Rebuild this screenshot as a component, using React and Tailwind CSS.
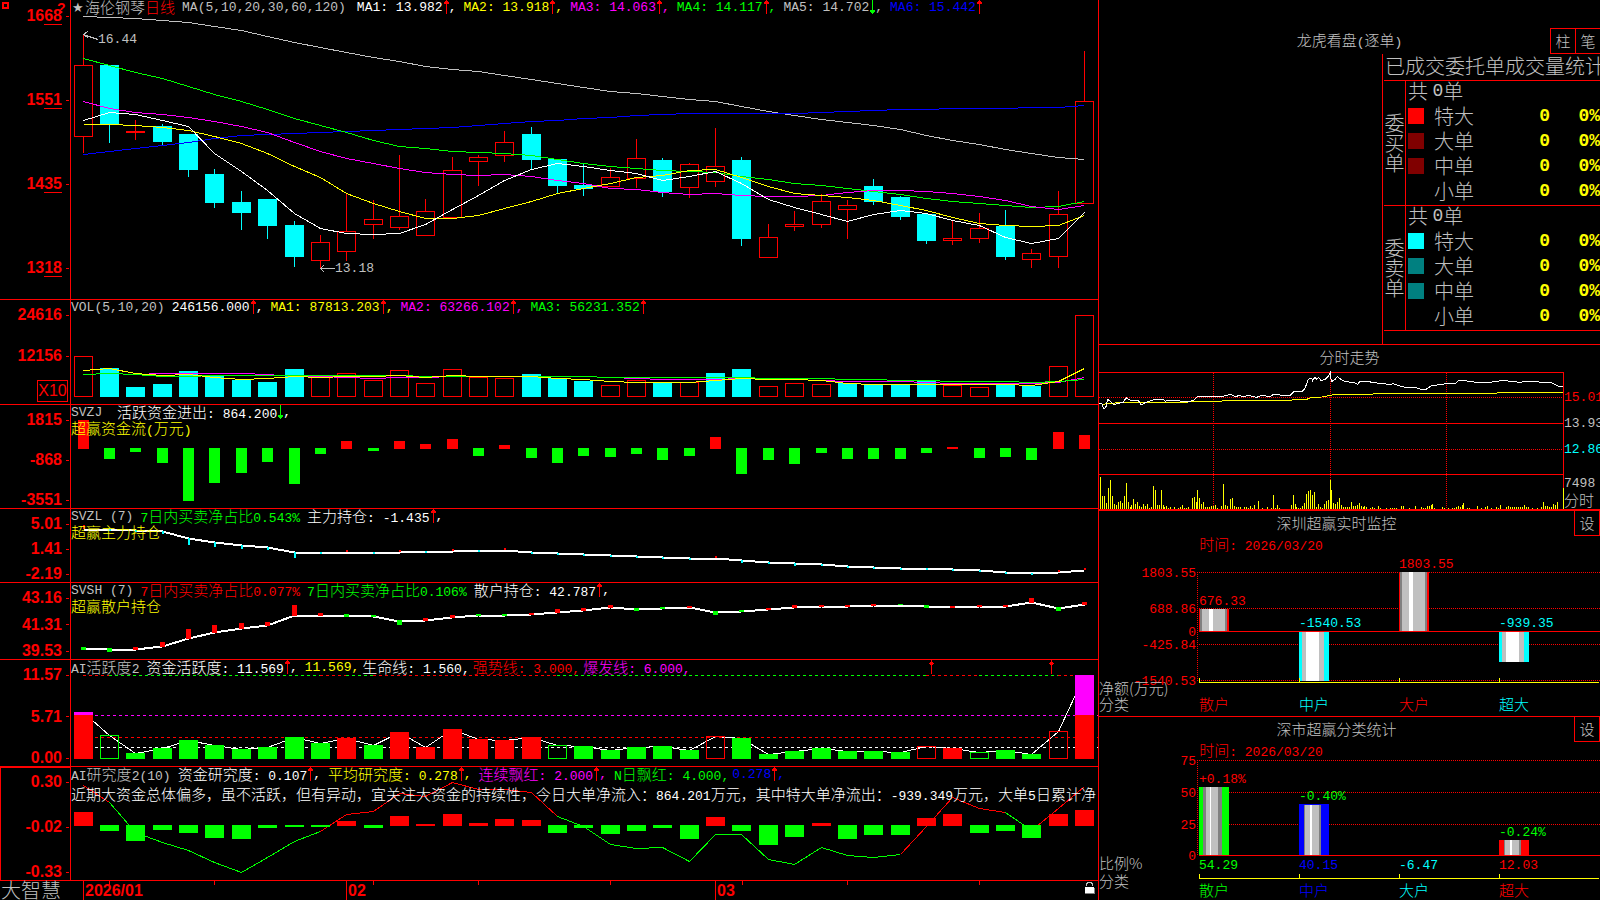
import React from "react";

const barX = (i) => Math.floor(83.2 + i * 26.35);

// [direction, high, body top, body bottom, low]
const candles = [
  ["up", 34, 65, 136, 153], ["down", 65, 65, 124, 143], ["up", 120, 131, 132, 140],
  ["down", 124, 126, 142, 145], ["down", 134, 134, 170, 177], ["down", 169, 174, 203, 208],
  ["down", 191, 202, 213, 230], ["down", 199, 199, 226, 239], ["down", 221, 225, 257, 267],
  ["up", 235, 242, 260, 268], ["up", 194, 231, 251, 261], ["up", 200, 219, 224, 239],
  ["up", 155, 216, 227, 230], ["up", 199, 211, 235, 235], ["up", 157, 170, 217, 217],
  ["up", 155, 157, 161, 186], ["up", 131, 142, 155, 162], ["down", 127, 134, 160, 170],
  ["down", 159, 159, 186, 194], ["down", 163, 185, 189, 196], ["up", 168, 177, 186, 186],
  ["up", 139, 158, 178, 188], ["down", 158, 160, 192, 197], ["up", 163, 164, 187, 198],
  ["up", 128, 166, 181, 187], ["down", 157, 160, 239, 246], ["up", 224, 237, 257, 257],
  ["up", 211, 224, 226, 231], ["up", 194, 201, 224, 228], ["up", 200, 205, 209, 239],
  ["down", 179, 186, 202, 205], ["down", 196, 197, 217, 220], ["down", 214, 214, 241, 244],
  ["up", 221, 238, 240, 245], ["up", 213, 228, 238, 243], ["down", 210, 226, 257, 260],
  ["up", 249, 253, 259, 268], ["up", 191, 214, 256, 268], ["up", 51, 101, 203, 203],
];

const maLines = [
  ["#c0c0c0", [16, 17, 18, 20, 22, 26, 30, 36, 42, 47, 52, 57, 61, 66, 69, 71, 75, 79, 83, 87, 91, 93, 96, 99, 101, 106, 111, 115, 119, 122, 125, 129, 135, 140, 144, 149, 153, 157, 159]],
  ["#0000ff", [154, 151, 148, 145, 142, 138, 135, 134, 133, 132, 131, 130, 129, 128, 127, 125, 123, 121, 120, 118, 117, 115, 114, 113, 113, 113, 113, 113, 112, 111, 110, 109, 109, 108, 108, 108, 107, 107, 105]],
  ["#00ff00", [58, 65, 72, 78, 86, 94, 101, 109, 118, 125, 132, 140, 146, 148, 151, 152, 153, 155, 159, 163, 166, 168, 170, 171, 172, 176, 179, 183, 185, 188, 191, 194, 198, 201, 203, 205, 207, 206, 201]],
  ["#ff00ff", [101, 108, 112, 114, 117, 121, 126, 132, 142, 151, 158, 163, 168, 172, 174, 175, 174, 176, 180, 183, 188, 189, 192, 194, 193, 195, 196, 196, 195, 192, 190, 190, 191, 193, 196, 200, 206, 209, 205]],
  ["#ffff00", [124, 124, 125, 127, 130, 136, 143, 153, 166, 177, 193, 203, 211, 218, 218, 215, 208, 201, 193, 188, 183, 177, 175, 170, 169, 177, 186, 193, 195, 197, 200, 205, 210, 217, 223, 225, 226, 225, 215]],
  ["#ffffff", [120, 112, 114, 120, 126, 153, 171, 190, 213, 228, 233, 234, 233, 224, 209, 195, 180, 169, 163, 166, 170, 173, 180, 176, 171, 183, 199, 207, 214, 221, 214, 210, 213, 220, 225, 237, 243, 238, 212]],
];

const volumes = [
  ["up", 356], ["down", 368], ["down", 387], ["down", 384], ["down", 371], ["down", 376], ["down", 380],
  ["down", 382], ["down", 369], ["up", 377], ["up", 373], ["up", 380], ["up", 370], ["up", 383],
  ["up", 369], ["up", 377], ["up", 378], ["down", 374], ["down", 378], ["down", 381], ["up", 385],
  ["up", 380], ["down", 382], ["up", 382], ["down", 373], ["down", 369], ["up", 386], ["up", 383],
  ["up", 384], ["down", 383], ["down", 385], ["down", 384], ["down", 381], ["up", 385], ["up", 387],
  ["down", 384], ["down", 386], ["up", 366], ["up", 315],
];

const volLines = [
  ["#ff00ff", [374, 373, 374, 373, 373, 373, 373, 374, 376, 376, 377, 378, 377, 377, 376, 376, 376, 376, 376, 376, 377, 378, 379, 379, 379, 378, 379, 379, 380, 381, 381, 381, 382, 383, 383, 383, 383, 382, 377]],
  ["#00ff00", [374, 373, 374, 376, 376, 375, 375, 375, 375, 375, 375, 375, 375, 376, 376, 376, 376, 376, 376, 376, 377, 377, 377, 377, 377, 377, 378, 378, 378, 379, 379, 380, 380, 381, 381, 381, 382, 381, 379]],
  ["#ffff00", [370, 368, 373, 375, 374, 377, 379, 378, 376, 377, 376, 376, 375, 377, 375, 376, 376, 376, 378, 379, 381, 382, 382, 382, 380, 378, 379, 379, 380, 383, 384, 384, 384, 384, 384, 384, 385, 381, 368]],
];

// other end of each money flow bar, measured from the zero line at 448
const flow = [420, 459, 452, 463, 501, 483, 473, 462, 484, 454, 441, 451, 441, 444, 439, 456, 445, 458, 463, 456, 457, 454, 460, 456, 437, 474, 460, 464, 453, 459, 459, 459, 453, 447, 458, 457, 460, 432, 435];

const mainHold = [529, 529, 530, 531, 538, 542, 545, 547, 552, 552, 552, 552, 552, 551, 551, 550, 550, 552, 553, 554, 555, 556, 557, 558, 558, 560, 562, 563, 564, 566, 567, 568, 568, 569, 570, 572, 573, 572, 570];
const mainTicks = [-4, 2, 2, 3, 7, 5, 4, 3, 6, 2, -2, 2, -2, 2, -2, 2, -2, 2, 2, 2, 2, 2, 2, 2, -2, 3, 2, 3, 2, 2, 2, 2, 2, 2, 2, 2, 2, -2, -2];

const retailHold = [648, 649, 649, 646, 638, 632, 628, 625, 615, 615, 615, 616, 621, 620, 617, 615, 615, 614, 612, 610, 607, 609, 608, 607, 612, 611, 609, 607, 606, 606, 605, 605, 606, 607, 606, 606, 602, 608, 604];
const retailTicks = [2, 3, -2, -4, -9, -7, -5, -3, -10, -2, 2, 1, 4, -2, -2, 1, 1, -1, -3, -2, -2, 2, 1, -1, 3, 1, -1, -2, -1, -1, -1, 0, 2, -1, -1, -1, -4, 3, -2];

// g/r are filled, G/R are outlines
const active = [
  ["r", 712], ["G", 735], ["g", 753], ["g", 748], ["g", 740], ["g", 745], ["g", 749], ["g", 747], ["g", 737],
  ["g", 743], ["r", 738], ["g", 745], ["r", 732], ["r", 747], ["r", 729], ["r", 739], ["r", 740], ["r", 737],
  ["G", 745], ["g", 746], ["g", 750], ["g", 747], ["g", 746], ["g", 750], ["R", 736], ["g", 738], ["g", 754],
  ["g", 751], ["g", 748], ["g", 751], ["g", 751], ["g", 752], ["R", 746], ["r", 748], ["G", 752], ["g", 750],
  ["g", 754], ["R", 731], ["r", 675],
];
const topDashes = [
  ["#ff0000", 83, 109], ["#00ff00", 109, 320], ["#ff0000", 320, 346], ["#00ff00", 346, 373],
  ["#ff0000", 373, 557], ["#00ff00", 557, 926], ["#ff0000", 926, 979], ["#00ff00", 979, 1058], ["#ff0000", 1058, 1075],
];

const research = [812, 831, 841, 830, 833, 838, 839, 828, 827, 827, 821, 828, 816, 824, 814, 823, 819, 820, 833, 828, 834, 831, 828, 839, 817, 831, 845, 837, 823, 839, 835, 835, 818, 814, 833, 831, 838, 814, 810];
const researchLine = [785, 802, 832, 842, 850, 862, 872, 857, 841, 831, 814, 811, 793, 796, 782, 789, 789, 792, 816, 826, 844, 848, 847, 861, 834, 834, 859, 864, 847, 855, 857, 854, 826, 797, 808, 812, 830, 808, 786];
const researchSegments = [
  ["#ff0000", 0, 1], ["#00ff00", 1, 9], ["#ff0000", 9, 18], ["#00ff00", 18, 31],
  ["#ff0000", 31, 35], ["#00ff00", 35, 36], ["#ff0000", 36, 38],
];

const minuteLine =
  "28,190 35,190 42,207 48,200 53,178 60,183 72,195 84,190 100,187 108,173 120,180 145,181 153,195 165,188 190,180 218,177 226,184 232,180 250,182 270,183 290,186 310,181 322,171 340,170 395,171 405,166 425,164 435,170 450,166 460,171 475,166 500,172 515,166 540,170 550,163 570,165 600,166 612,155 635,155 645,145 655,118 665,115 668,122 674,112 680,118 686,112 693,122 705,118 715,108 721,98 724,125 735,118 742,110 755,120 765,125 790,127 803,133 810,124 835,125 860,129 885,131 895,135 910,131 930,138 945,142 980,144 995,149 1010,147 1025,137 1050,134 1070,131 1095,131 1105,123 1125,122 1160,127 1200,127 1240,121 1255,123 1290,127 1310,124 1385,128 1405,138 1420,139";
const averageLine =
  "38,193 60,190 105,187 290,187 300,184 395,184 400,181 605,181 610,178 650,178 665,172 695,171 715,167 740,163 848,163 852,160 1220,160 1224,157 1420,157";
const minuteVolumes = [
  [31, 411], [37, 468], [43, 468], [49, 488], [55, 444], [61, 420], [67, 468], [73, 491], [79, 494], [85, 486],
  [91, 483], [97, 488], [103, 468], [109, 429], [115, 486], [121, 500], [124, 494], [130, 477], [136, 492],
  [142, 486], [148, 498], [154, 500], [160, 492], [166, 498], [172, 492], [178, 503], [184, 500], [190, 438],
  [196, 450], [202, 495], [208, 495], [214, 450], [220, 494], [223, 501], [229, 498], [235, 503], [241, 501],
  [253, 501], [265, 503], [271, 500], [277, 495], [283, 503], [289, 504], [295, 501], [307, 474], [313, 471],
  [319, 486], [322, 450], [328, 474], [334, 491], [340, 486], [346, 500], [352, 501], [358, 501], [364, 498],
  [370, 497], [376, 495], [382, 503], [394, 498], [400, 432], [406, 495], [412, 498], [421, 477], [427, 474],
  [433, 497], [439, 501], [445, 501], [451, 501], [463, 500], [469, 501], [475, 504], [481, 498], [487, 503],
  [493, 495], [505, 483], [517, 503], [532, 500], [544, 503], [550, 465], [556, 503], [562, 495], [568, 503],
  [604, 495], [610, 465], [616, 492], [619, 500], [625, 504], [631, 503], [637, 497], [643, 490], [649, 462],
  [655, 453], [661, 450], [667, 465], [673, 456], [679, 501], [685, 492], [691, 500], [697, 503], [703, 492],
  [709, 483], [715, 480], [721, 420], [724, 450], [730, 489], [736, 492], [742, 486], [748, 474], [754, 495],
  [760, 501], [766, 501], [772, 500], [778, 500], [784, 486], [790, 498], [796, 497], [802, 495], [808, 489],
  [814, 498], [820, 501], [823, 498], [829, 501], [841, 504], [847, 501], [853, 503], [865, 498], [871, 504],
  [889, 504], [901, 504], [907, 503], [913, 504], [919, 504], [934, 498], [940, 498], [958, 503], [976, 498],
  [994, 501], [1000, 503], [1006, 503], [1012, 498], [1018, 498], [1024, 495], [1027, 492], [1033, 503],
  [1057, 501], [1063, 504], [1075, 504], [1087, 504], [1093, 503], [1099, 500], [1105, 498], [1111, 500],
  [1117, 495], [1120, 489], [1132, 503], [1138, 504], [1162, 498], [1174, 504], [1186, 501], [1192, 498],
  [1204, 504], [1219, 501], [1225, 503], [1231, 495], [1249, 501], [1255, 498], [1261, 500], [1267, 501],
  [1273, 501], [1279, 501], [1285, 501], [1291, 501], [1297, 500], [1303, 495], [1309, 501], [1315, 500],
  [1327, 503], [1342, 503], [1354, 501], [1360, 486], [1366, 498], [1372, 498], [1378, 501], [1384, 500],
  [1390, 492], [1396, 495], [1402, 486], [1420, 444],
];

const toPoints = (ys, from = 0) => ys.map((y, i) => `${barX(i + from) + 0.5},${y + 0.5}`).join(" ");

// Latin is set in the mono face, Chinese in the CJK face one step larger
const Txt = ({ children }) => (
  <span className="whitespace-pre">
    {String(children).split(/([^\x00-\x7F]+)/).filter(Boolean).map((part, i) =>
      /[^\x00-\x7F]/.test(part) ? (
        <span key={i} className="font-['Noto_Sans_CJK_SC',sans-serif] text-[15px] font-light">{part}</span>
      ) : (
        <span key={i} className="font-['Liberation_Mono',monospace] text-[13px]">{part}</span>
      )
    )}
  </span>
);

const Arrow = ({ down }) => (
  <svg viewBox="0 0 6 15" className="h-[15px] w-[6px] shrink-0" shapeRendering="crispEdges">
    {down ? (
      <path d="M3 0h1v14h-1zM1 10h5v2h-5zM2 12h3v1h-3z" fill="#00ff00" />
    ) : (
      <path d="M3 0h1v14h-1zM2 1h3v1h-3zM1 2h5v2h-5z" fill="#ff0000" />
    )}
  </svg>
);

const Item = ({ color, text, dir }) => (
  <span className={`flex items-center ${color} ${text.endsWith(",") ? "-mr-1" : ""}`}>
    <Txt>{text}</Txt>
    {dir && <Arrow down={dir === "down"} />}
    {dir && <Txt>,</Txt>}
  </span>
);

const Tick = ({ children }) => (
  <div className="flex h-4 items-center justify-end gap-1 font-['Liberation_Sans',sans-serif] text-base leading-4 font-bold text-[#ff0000]">
    {children}
    <span className="h-px w-[3px] bg-[#ff0000]" />
  </div>
);

const Panel = ({ size, axis, box, header, note, noteStyle = "", children }) => (
  <section className={`flex border-b border-[#ff0000] ${size}`}>
    <div className={`flex w-[71px] shrink-0 flex-col border-r border-[#ff0000] pr-px ${box || "justify-between pt-[7px]"}`}>
      {axis}
    </div>
    <div className="relative min-w-0 flex-1 overflow-hidden">
      {children}
      <div className="absolute inset-x-0 top-0">
        <div className="flex h-[15px] items-center gap-[7px] leading-[15px]">{header}</div>
        {note && <p className={`h-[15px] leading-[15px] ${noteStyle || "text-[#ffff00]"}`}><Txt>{note}</Txt></p>}
      </div>
    </div>
  </section>
);

const Plot = ({ top, height, children }) => (
  <svg
    viewBox={`71 ${top} 1027 ${height}`}
    preserveAspectRatio="none"
    shapeRendering="crispEdges"
    className="block h-full w-full"
    fill="none"
  >
    {children}
  </svg>
);

const Labels = ({ values }) => values.map((v) => <Tick key={v}>{v}</Tick>);

const PriceChart = () => (
  <Panel
    size="h-[300px]"
    box="justify-between pt-2 pb-[23px]"
    axis={["1668", "1551", "1435", "1318"].map((v) => (
      <Tick key={v}>
        <span>
          {v.slice(0, 2)}
          <span className="border-b border-[#ff0000]">{v.slice(2)}</span>
        </span>
      </Tick>
    ))}
    header={
      <>
        <span className="flex items-center pl-px text-[#c0c0c0]">
          <span className="w-[13px] font-['DejaVu_Sans',sans-serif] text-[13px]">★</span>
          <Txt>海伦钢琴</Txt>
          <span className="text-[#ff0000]"><Txt>日线</Txt></span>
        </span>
        <span className="mr-1 text-[#c0c0c0]"><Txt>MA(5,10,20,30,60,120)</Txt></span>
        <Item color="text-white" text="MA1: 13.982" dir="up" />
        <Item color="text-[#ffff00]" text="MA2: 13.918" dir="up" />
        <Item color="text-[#ff00ff]" text="MA3: 14.063" dir="up" />
        <Item color="text-[#00ff00]" text="MA4: 14.117" dir="up" />
        <Item color="text-[#c0c0c0]" text="MA5: 14.702" dir="down" />
        <span className="flex items-center text-[#0000ff]"><Txt>MA6: 15.442</Txt><Arrow /></span>
      </>
    }
  >
    <Plot top={0} height={299}>
      {candles.map(([dir, high, top, bottom, low], i) => {
        const x = barX(i);
        return dir === "down" ? (
          <g key={i} fill="#00ffff">
            <rect x={x} y={high} width="1" height={low - high} />
            <rect x={x - 9} y={top} width="19" height={bottom - top} />
          </g>
        ) : (
          <g key={i} stroke="#ff0000">
            <path d={`M${x + 0.5} ${high}V${top}M${x + 0.5} ${bottom}V${low}`} />
            <rect x={x - 8.5} y={top + 0.5} width="18" height={bottom - top} />
          </g>
        );
      })}
      {maLines.map(([color, ys]) => (
        <polyline key={color} points={toPoints(ys)} stroke={color} />
      ))}
      <path d="M83 34.5L98 39.5M88 31L83.5 34.5L88 38M320 268.5H335M324 265L320.5 268.5L324 272" stroke="#c0c0c0" />
    </Plot>
    <span className="absolute top-[32px] left-[27px] leading-4 text-[#c0c0c0]"><Txt>16.44</Txt></span>
    <span className="absolute top-[261px] left-[264px] leading-4 text-[#c0c0c0]"><Txt>13.18</Txt></span>
  </Panel>
);

const VolumeChart = () => (
  <Panel
    size="h-[105px]"
    box="pt-[7px]"
    axis={
      <>
        <Tick>24616</Tick>
        <div className="mt-[25px]"><Tick>12156</Tick></div>
        <div className="mt-4 mr-px ml-auto h-[22px] w-[31px] border border-[#ff0000] text-center font-['Liberation_Sans',sans-serif] text-base leading-5 text-[#ff0000]">
          X10
        </div>
      </>
    }
    header={
      <>
        <Item color="text-[#c0c0c0]" text="VOL(5,10,20)" />
        <Item color="text-white" text="246156.000" dir="up" />
        <Item color="text-[#ffff00]" text="MA1: 87813.203" dir="up" />
        <Item color="text-[#ff00ff]" text="MA2: 63266.102" dir="up" />
        <span className="flex items-center text-[#00ff00]"><Txt>MA3: 56231.352</Txt><Arrow /></span>
      </>
    }
  >
    <Plot top={300} height={104}>
      {volumes.map(([dir, top], i) =>
        dir === "down" ? (
          <rect key={i} x={barX(i) - 9} y={top} width="19" height={397 - top} fill="#00ffff" />
        ) : (
          <rect key={i} x={barX(i) - 8.5} y={top + 0.5} width="18" height={396 - top} stroke="#ff0000" />
        )
      )}
      {volLines.map(([color, ys]) => (
        <polyline key={color} points={toPoints(ys)} stroke={color} />
      ))}
    </Plot>
  </Panel>
);

const FlowChart = () => (
  <Panel
    size="h-[104px]"
    axis={<Labels values={["1815", "-868", "-3551"]} />}
    header={
      <>
        <Item color="text-[#c0c0c0]" text="SVZJ " />
        <Item color="text-white" text="活跃资金进出: 864.200" dir="down" />
      </>
    }
    note="超赢资金流(万元)"
  >
    <Plot top={405} height={103}>
      {flow.map((y, i) => (
        <rect
          key={i}
          x={barX(i) - 5}
          y={Math.min(y, 448)}
          width="11"
          height={y < 448 ? 449 - y : y - 448}
          fill={y < 448 ? "#ff0000" : "#00ff00"}
        />
      ))}
    </Plot>
  </Panel>
);

const MainHoldChart = () => (
  <Panel
    size="h-[74px]"
    axis={<Labels values={["5.01", "1.41", "-2.19"]} />}
    header={
      <>
        <Item color="text-[#c0c0c0]" text="SVZL (7)" />
        <Item color="text-[#00ff00]" text="7日内买卖净占比0.543%" />
        <Item color="text-white" text="主力持仓: -1.435" dir="up" />
      </>
    }
    note="超赢主力持仓"
  >
    <Plot top={509} height={73}>
      <polyline points={toPoints(mainHold)} stroke="#ffffff" strokeWidth="2" />
      {mainTicks.map((t, i) => (
        <rect
          key={i}
          x={barX(i)}
          y={t < 0 ? mainHold[i] + t : mainHold[i]}
          width="2"
          height={Math.abs(t)}
          fill={t < 0 ? "#ff0000" : "#00ffff"}
        />
      ))}
    </Plot>
  </Panel>
);

const RetailHoldChart = () => (
  <Panel
    size="h-[77px]"
    axis={<Labels values={["43.16", "41.31", "39.53"]} />}
    header={
      <>
        <Item color="text-[#c0c0c0]" text="SVSH (7)" />
        <Item color="text-[#ff0000]" text="7日内买卖净占比0.077%" />
        <Item color="text-[#00ff00]" text="7日内买卖净占比0.106%" />
        <Item color="text-white" text="散户持仓: 42.787" dir="up" />
      </>
    }
    note="超赢散户持仓"
  >
    <Plot top={583} height={76}>
      <polyline points={toPoints(retailHold)} stroke="#ffffff" strokeWidth="2" />
      {retailTicks.map((t, i) => (
        <rect
          key={i}
          x={barX(i) - 2}
          y={t < 0 ? retailHold[i] + t : retailHold[i] - 1}
          width="5"
          height={Math.abs(t) + 1}
          fill={t < 0 ? "#ff0000" : "#00ff00"}
        />
      ))}
    </Plot>
  </Panel>
);

const ActiveChart = () => (
  <Panel
    size="h-[107px]"
    axis={<Labels values={["11.57", "5.71", "0.00"]} />}
    header={
      <>
        <Item color="text-[#c0c0c0]" text="AI活跃度2" />
        <Item color="text-white" text="资金活跃度: 11.569" dir="up" />
        <Item color="text-[#ffff00]" text="11.569," />
        <Item color="text-white" text="生命线: 1.560," />
        <Item color="text-[#ff0000]" text="强势线: 3.000," />
        <Item color="text-[#ff00ff]" text="爆发线: 6.000," />
      </>
    }
  >
    <Plot top={660} height={106}>
      {topDashes.map(([color, from, to]) => (
        <path key={from} d={`M${from} 675.5H${to}`} stroke={color} strokeDasharray="3 3" />
      ))}
      <path d="M95 715.5H1098" stroke="#ff00ff" strokeDasharray="3 3" />
      <path d="M95 737.5H1098" stroke="#ff0000" strokeDasharray="3 3" />
      <path d="M95 747.5H1098" stroke="#ffffff" strokeDasharray="3 3" />
      <polyline points={toPoints(active.map(([, y]) => y))} stroke="#ffffff" />
      {active.map(([kind, y], i) => {
        const color = kind.toLowerCase() === "g" ? "#00ff00" : "#ff0000";
        return kind === "G" || kind === "R" ? (
          <rect key={i} x={barX(i) - 8.5} y={y + 0.5} width="18" height={758 - y} stroke={color} />
        ) : (
          <rect key={i} x={barX(i) - 9} y={y} width="19" height={759 - y} fill={color} />
        );
      })}
      <rect x="74" y="712" width="19" height="3" fill="#ff00ff" />
      <rect x="1075" y="675" width="19" height="40" fill="#ff00ff" />
      {[931, 1051].map((x) => (
        <path key={x} d={`M${x} 660h1v14h-1zM${x - 1} 662h3v1h-3zM${x - 2} 663h5v1h-5zM${x - 1} 664h3v1h-3z`} fill="#ff0000" />
      ))}
    </Plot>
  </Panel>
);

const ResearchChart = () => (
  <Panel
    size="h-[114px]"
    box="justify-between border-t border-l pt-[6px]"
    axis={<Labels values={["0.30", "-0.02", "-0.33"]} />}
    header={
      <>
        <Item color="text-[#c0c0c0]" text="AI研究度2(10)" />
        <Item color="text-white" text="资金研究度: 0.107" dir="up" />
        <Item color="text-[#ffff00]" text="平均研究度: 0.278" dir="up" />
        <Item color="text-[#ff00ff]" text="连续飘红: 2.000" dir="up" />
        <Item color="text-[#00ff00]" text="N日飘红: 4.000," />
        <Item color="text-[#0000ff]" text="0.278" dir="up" />
      </>
    }
    note="近期大资金总体偏多，虽不活跃，但有异动，宜关注大资金的持续性，今日大单净流入：864.201万元，其中特大单净流出：-939.349万元，大单5日累计净"
    noteStyle="text-white mt-1"
  >
    <Plot top={767} height={113}>
      {researchSegments.map(([color, from, to]) => (
        <polyline key={from} points={toPoints(researchLine.slice(from, to + 1), from)} stroke={color} />
      ))}
      {research.map((y, i) => (
        <rect
          key={i}
          x={barX(i) - 9}
          y={Math.min(y, 825)}
          width="19"
          height={y < 825 ? 826 - y : y - 825}
          fill={y < 825 ? "#ff0000" : "#00ff00"}
        />
      ))}
    </Plot>
  </Panel>
);

const months = [["2026/01", 0], ["02", 10], ["03", 24]];

const TimeAxis = () => (
  <div className="flex h-[19px]">
    <div className="w-[71px] shrink-0 pl-px font-['Noto_Sans_CJK_SC',sans-serif] text-[20px] leading-[18px] font-light text-[#c0c0c0]">
      大智慧
    </div>
    <div className="relative min-w-0 flex-1">
      <Plot top={881} height={19}>
        <path d="M83.5 881v19M346.5 881v19M715.5 881v19" stroke="#ff0000" />
        <path d="M109.5 881v4M214.5 881v4M373.5 881v4M478.5 881v4M610.5 881v4M742.5 881v4M847.5 881v4M979.5 881v4" stroke="#ff0000" />
      </Plot>
      {months.map(([label, i]) => (
        <span
          key={label}
          className="absolute top-0 pl-[2px] font-['Liberation_Sans',sans-serif] text-base leading-[19px] font-bold text-[#ff0000]"
          style={{ left: `${((barX(i) - 71) / 1027) * 100}%` }}
        >
          {label}
        </span>
      ))}
      <svg viewBox="0 0 10 12" className="absolute top-px right-[3px] h-3 w-[10px]" shapeRendering="crispEdges">
        <path d="M2 0h5v1h1v3h-1v-2h-1v-1h-3v1h-1v2h-1v-3h1z" fill="#c0c0c0" />
        <rect x="0" y="5" width="9" height="6" fill="#ffffff" />
        <path d="M9 6h1v6h-10v-1h9z" fill="#808080" />
      </svg>
    </div>
  </div>
);

const orderGroups = [
  { side: "委买单", swatches: ["bg-[#ff0000]", "bg-[#800000]", "bg-[#800000]", ""] },
  { side: "委卖单", swatches: ["bg-[#00ffff]", "bg-[#008080]", "bg-[#008080]", ""] },
];
const sizes = ["特大", "大单", "中单", "小单"];

const OrderStats = () => (
  <section className="flex h-[345px] flex-col border-b border-[#ff0000] pt-7">
    <div className="grid h-[26px] grid-cols-[1fr_auto_1fr] items-center text-[#c0c0c0]">
      <h2 className="col-start-2 leading-4"><Txt>龙虎看盘(逐单)</Txt></h2>
      <div className="flex h-[26px] justify-end">
        <button className="w-[25px] border border-r-0 border-[#ff0000] leading-6"><Txt>柱</Txt></button>
        <button className="w-[25px] border border-r-0 border-[#ff0000] leading-6"><Txt>笔</Txt></button>
      </div>
    </div>
    <div className="flex flex-1">
      <div className="mr-px flex-1 border-r border-[#ff0000]" />
      <div className="w-[216px] overflow-hidden font-['Noto_Sans_CJK_SC',sans-serif] text-[20px] font-light text-[#c0c0c0]">
        <h3 className="h-[27px] border-b border-[#ff0000] pl-px leading-6 whitespace-nowrap">已成交委托单成交量统计</h3>
        <table className="w-full table-fixed border-separate border-spacing-0">
          <colgroup>
            <col className="w-[22px]" />
            <col className="w-[28px]" />
            <col className="w-[64px]" />
            <col />
            <col className="w-[50px]" />
          </colgroup>
          {orderGroups.map(({ side, swatches }) => (
            <tbody key={side}>
              <tr className="h-[25px]">
                <th rowSpan={5} scope="rowgroup" className="border-r border-b border-[#ff0000] p-0 align-middle leading-5 font-light">
                  {side}
                </th>
                <td colSpan={4} className="p-0 pl-[2px] align-top">
                  <div className="flex h-5 items-center leading-5">
                    <span className="whitespace-pre">共 </span>
                    <span className="font-['Liberation_Mono',monospace] text-[18px]">0</span>
                    <span>单</span>
                  </div>
                </td>
              </tr>
              {sizes.map((name, i) => {
                const edge = i === 3 ? "border-b border-[#ff0000]" : "";
                return (
                  <tr key={name} className="h-[25px]">
                    <td className={`p-0 pt-[2px] pl-[2px] align-top ${edge}`}>
                      <span className={`block size-4 ${swatches[i]}`} />
                    </td>
                    <td className={`p-0 align-top leading-5 ${edge}`}>{name}</td>
                    <td className={`p-0 text-right align-top font-['Liberation_Mono',monospace] text-[18px] leading-5 font-bold text-[#ffff00] ${edge}`}>0</td>
                    <td className={`p-0 text-right align-top font-['Liberation_Mono',monospace] text-[18px] leading-5 font-bold text-[#ffff00] ${edge}`}>0%</td>
                  </tr>
                );
              })}
            </tbody>
          ))}
        </table>
      </div>
    </div>
  </section>
);

const MinuteChart = () => (
  <section className="border-b-2 border-[#ff0000]">
    <h2 className="h-[27px] text-center leading-6 text-[#c0c0c0]"><Txt>分时走势</Txt></h2>
    <div className="flex h-[137px]">
      <div className="min-w-0 flex-1 border-t border-r border-[#ff0000]">
        <svg
          viewBox="27 99 1392 408"
          preserveAspectRatio="none"
          shapeRendering="crispEdges"
          className="block h-full w-full overflow-visible"
          fill="none"
          strokeWidth="3"
        >
          <path d="M27 250.5H1419M27 403.5H1419" stroke="#ff0000" />
          <path d="M27 172.5H1419M27 328.5H1419M370.5 99V507M721.5 99V507M1069.5 99V507" stroke="#ff0000" strokeDasharray="3 3" />
          {minuteVolumes.map(([x, y]) => (
            <path key={x} d={`M${x + 0.5} ${y}V507`} stroke="#ffff00" />
          ))}
          <polyline points={averageLine} stroke="#ffff00" />
          <polyline points={minuteLine} stroke="#ffffff" />
        </svg>
      </div>
      <div className="flex w-[36px] flex-col pt-[18px] leading-4 text-[#c0c0c0]">
        <span className="h-4 text-[#ff0000]"><Txt>15.01</Txt></span>
        <span className="mt-[10px] h-4"><Txt>13.93</Txt></span>
        <span className="mt-[10px] h-4 text-[#00ffff]"><Txt>12.86</Txt></span>
        <span className="mt-[18px] h-4"><Txt>7498</Txt></span>
        <span className="h-4"><Txt>分时</Txt></span>
      </div>
    </div>
  </section>
);

const Num = ({ x, y, fill = "#ff0000", anchor = "start", children }) => (
  <text x={x} y={y + 4} fill={fill} textAnchor={anchor} className="font-['Liberation_Mono',monospace] text-[13px]">
    {children}
  </text>
);

const Name = ({ x, y, fill = "#c0c0c0", children }) => (
  <text x={x} y={y + 5} fill={fill} className="font-['Noto_Sans_CJK_SC',sans-serif] text-[15px] font-light">
    {children}
  </text>
);

// stripes are [offset, width, colour] across the bar
const Bar = ({ x, y, height, fill, stripes, inset = 0 }) => (
  <g>
    <rect x={x} y={y} width="30" height={height} fill={fill} />
    {stripes.map(([dx, w, color]) => (
      <rect key={dx} x={x + dx} y={y + inset} width={w} height={height - inset} fill={color} />
    ))}
  </g>
);

const wide = [[1, 2, "#808080"], [3, 7, "#c0c0c0"], [10, 4, "#ffffff"], [14, 12, "#c0c0c0"], [26, 2, "#808080"]];
const bright = [[3, 4, "#c0c0c0"], [7, 13, "#ffffff"], [20, 5, "#c0c0c0"]];
const green = [[4, 3, "#808080"], [7, 4, "#c0c0c0"], [11, 1, "#ffffff"], [12, 7, "#c0c0c0"], [19, 4, "#808080"]];
const narrow = [[5, 1, "#808080"], [6, 5, "#c0c0c0"], [11, 2, "#ffffff"], [13, 7, "#c0c0c0"], [20, 2, "#808080"]];

const StatPanel = ({ title, size, viewBox, children }) => (
  <section className={`flex flex-col ${size}`}>
    <div className="flex h-[25px] shrink-0 items-start text-[#c0c0c0]">
      <h2 className="flex-1 text-center leading-6"><Txt>{title}</Txt></h2>
      <button className="-mt-px h-[26px] w-[26px] border border-[#ff0000] leading-6"><Txt>设</Txt></button>
    </div>
    <p className="h-[18px] pl-[20%] leading-4 text-[#ff0000]"><Txt>时间: 2026/03/20</Txt></p>
    <svg viewBox={viewBox} preserveAspectRatio="xMinYMin meet" shapeRendering="crispEdges" className="block w-full overflow-visible" fill="none">
      {children}
    </svg>
  </section>
);

const AmountPanel = () => (
  <StatPanel title="深圳超赢实时监控" size="border-b border-[#ff0000]" viewBox="1099 554 501 162">
    <path d="M1197 572.5H1600M1197 608.5H1600M1197 644.5H1600M1197 680.5H1600M1197.5 572V681" stroke="#ff0000" strokeDasharray="1 1" />
    <Bar x={1199} y={609} height={22} fill="#ff0000" stripes={wide} />
    <Bar x={1299} y={632} height={49} fill="#00ffff" stripes={bright} />
    <Bar x={1399} y={572} height={59} fill="#ff0000" stripes={wide} />
    <Bar x={1499} y={632} height={30} fill="#00ffff" stripes={bright} />
    <path d="M1199 631.5H1600" stroke="#ff0000" />
    <path d="M1199 682.5H1599M1199.5 678V682M1299.5 678V682M1399.5 678V682M1499.5 678V682" stroke="#ffff00" />
    <Num x={1196} y={573} anchor="end">1803.55</Num>
    <Num x={1196} y={609} anchor="end">688.86</Num>
    <Num x={1196} y={632} anchor="end">0</Num>
    <Num x={1196} y={645} anchor="end">-425.84</Num>
    <Num x={1196} y={681} anchor="end">-1540.53</Num>
    <Num x={1199} y={601}>676.33</Num>
    <Num x={1299} y={623} fill="#00ffff">-1540.53</Num>
    <Num x={1399} y={564}>1803.55</Num>
    <Num x={1499} y={623} fill="#00ffff">-939.35</Num>
    <Name x={1099} y={689}>净额(万元)</Name>
    <Name x={1099} y={705}>分类</Name>
    <Name x={1199} y={705} fill="#ff0000">散户</Name>
    <Name x={1299} y={705} fill="#00ffff">中户</Name>
    <Name x={1399} y={705} fill="#ff0000">大户</Name>
    <Name x={1499} y={705} fill="#00ffff">超大</Name>
  </StatPanel>
);

const RatioPanel = () => (
  <StatPanel title="深市超赢分类统计" size="" viewBox="1099 760 501 140">
    <path d="M1197 760.5H1600M1197 792.5H1600M1197 824.5H1600M1197.5 760V856" stroke="#ff0000" strokeDasharray="1 1" />
    <Bar x={1199} y={787} height={68} fill="#00ff00" stripes={green} />
    <Bar x={1299} y={804} height={51} fill="#0000ff" stripes={narrow} inset={1} />
    <Bar x={1499} y={840} height={15} fill="#ff0000" stripes={narrow} />
    <path d="M1199 855.5H1600" stroke="#ff0000" />
    <path d="M1199 878.5H1599M1199.5 874V878M1299.5 874V878M1399.5 874V878M1499.5 874V878" stroke="#ffff00" />
    <Num x={1196} y={761} anchor="end">75</Num>
    <Num x={1196} y={793} anchor="end">50</Num>
    <Num x={1196} y={825} anchor="end">25</Num>
    <Num x={1196} y={856} anchor="end">0</Num>
    <Num x={1199} y={779}>+0.18%</Num>
    <Num x={1299} y={796} fill="#00ff00">-0.40%</Num>
    <Num x={1499} y={832} fill="#00ff00">-0.24%</Num>
    <Num x={1199} y={865} fill="#00ff00">54.29</Num>
    <Num x={1299} y={865} fill="#0000ff">40.15</Num>
    <Num x={1399} y={865} fill="#00ffff">-6.47</Num>
    <Num x={1499} y={865}>12.03</Num>
    <Name x={1099} y={864}>比例%</Name>
    <Name x={1099} y={882}>分类</Name>
    <Name x={1199} y={891} fill="#00ff00">散户</Name>
    <Name x={1299} y={891} fill="#0000ff">中户</Name>
    <Name x={1399} y={891} fill="#00ffff">大户</Name>
    <Name x={1499} y={891} fill="#ff0000">超大</Name>
  </StatPanel>
);

const App = () => {
  return (
    <div className="grid min-h-screen grid-cols-[1099fr_501fr] overflow-hidden bg-black font-['Liberation_Mono','Noto_Sans_CJK_SC',monospace] text-[13px]">
      <main className="relative min-w-0 border-r border-[#ff0000]">
        <PriceChart />
        <VolumeChart />
        <FlowChart />
        <MainHoldChart />
        <RetailHoldChart />
        <ActiveChart />
        <ResearchChart />
        <TimeAxis />
        <span className="absolute top-[2px] left-[2px] size-[7px] border-2 border-[#ff0000]" />
        <span className="absolute top-[2px] left-[57px] font-['Liberation_Sans',sans-serif] text-sm leading-3 font-bold text-[#ff0000]">?</span>
      </main>
      <aside className="min-w-0 overflow-hidden">
        <OrderStats />
        <MinuteChart />
        <AmountPanel />
        <RatioPanel />
      </aside>
    </div>
  );
};

export default App;
